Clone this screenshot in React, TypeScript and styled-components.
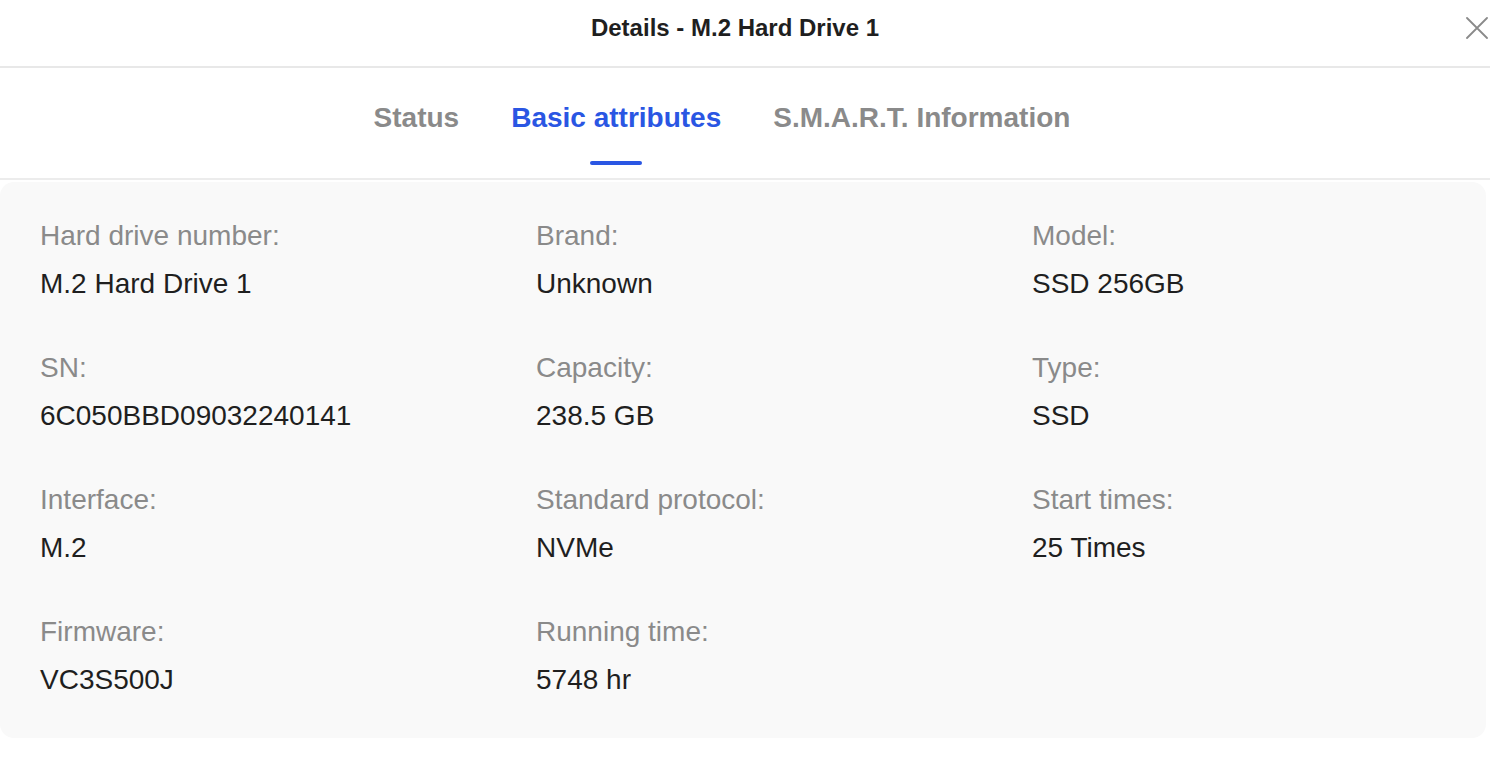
import React, { FunctionComponent, useState } from "react"
import styled, { createGlobalStyle } from "styled-components"

const GlobalStyle = createGlobalStyle`
  html, body {
    margin: 0;
    padding: 0;
    background: #ffffff;
    font-family: "Liberation Sans", Arial, Helvetica, sans-serif;
  }
  * { box-sizing: border-box; }
`

const Dialog = styled.div`
  width: 1490px;
  height: 758px;
  background: #ffffff;
  display: flex;
  flex-direction: column;
`

const Header = styled.header`
  height: 68px;
  display: flex;
  align-items: center;
  justify-content: center;
  position: relative;
  border-bottom: 2px solid #e8e8e8;
  padding: 0 20px 10px 0;
`

const Title = styled.h1`
  margin: 0;
  font-size: 24px;
  font-weight: 700;
  color: #1f1f1f;
`

const CloseButton = styled.button`
  position: absolute;
  right: 1px;
  top: 16px;
  width: 24px;
  height: 24px;
  padding: 0;
  border: none;
  background: none;
  cursor: pointer;
  display: flex;
  align-items: center;
  justify-content: center;
`

const TabBar = styled.nav`
  height: 112px;
  display: flex;
  justify-content: center;
  gap: 52px;
  border-bottom: 2px solid #ececec;
  padding-right: 46px;
`

const Tab = styled.button<{ $active?: boolean }>`
  position: relative;
  border: none;
  background: none;
  padding: 34px 0 0;
  height: 100%;
  font-family: inherit;
  font-size: 28px;
  font-weight: 700;
  color: ${(props) => (props.$active ? "#2a56e3" : "#8a8a8a")};
  cursor: pointer;
  display: flex;
  align-items: flex-start;

  &::after {
    content: "";
    display: ${(props) => (props.$active ? "block" : "none")};
    position: absolute;
    left: 50%;
    bottom: 13px;
    width: 52px;
    height: 4px;
    margin-left: -26px;
    border-radius: 2px;
    background: #2a56e3;
  }
`

const Panel = styled.section`
  margin: 2px 4px 0 0;
  background: #f9f9f9;
  border-radius: 14px;
  padding: 38px 40px 42px;
  display: grid;
  grid-template-columns: repeat(3, 496px);
  row-gap: 52px;
`

const Field = styled.div`
  display: flex;
  flex-direction: column;
  gap: 16px;
`

const Label = styled.span`
  font-size: 28px;
  line-height: 32px;
  color: #8a8a8a;
`

const Value = styled.span`
  font-size: 28px;
  line-height: 32px;
  color: #1f1f1f;
`

const attributes = [
  { label: "Hard drive number:", value: "M.2 Hard Drive 1" },
  { label: "Brand:", value: "Unknown" },
  { label: "Model:", value: "SSD 256GB" },
  { label: "SN:", value: "6C050BBD09032240141" },
  { label: "Capacity:", value: "238.5 GB" },
  { label: "Type:", value: "SSD" },
  { label: "Interface:", value: "M.2" },
  { label: "Standard protocol:", value: "NVMe" },
  { label: "Start times:", value: "25 Times" },
  { label: "Firmware:", value: "VC3S500J" },
  { label: "Running time:", value: "5748 hr" },
]

const tabs = ["Status", "Basic attributes", "S.M.A.R.T. Information"]

const App: FunctionComponent = () => {
  const [activeTab, setActiveTab] = useState("Basic attributes")
  return (
    <Dialog>
      <GlobalStyle />
      <Header>
        <Title>Details - M.2 Hard Drive 1</Title>
        <CloseButton aria-label="Close">
          <svg width="22" height="22" viewBox="0 0 22 22">
            <path
              d="M1 1 L21 21 M21 1 L1 21"
              stroke="#8a8a8a"
              strokeWidth="1.8"
              strokeLinecap="round"
            />
          </svg>
        </CloseButton>
      </Header>
      <TabBar>
        {tabs.map((tab) => (
          <Tab
            key={tab}
            $active={tab === activeTab}
            onClick={() => setActiveTab(tab)}
          >
            {tab}
          </Tab>
        ))}
      </TabBar>
      <Panel>
        {attributes.map((item) => (
          <Field key={item.label}>
            <Label>{item.label}</Label>
            <Value>{item.value}</Value>
          </Field>
        ))}
      </Panel>
    </Dialog>
  )
}

export default App
